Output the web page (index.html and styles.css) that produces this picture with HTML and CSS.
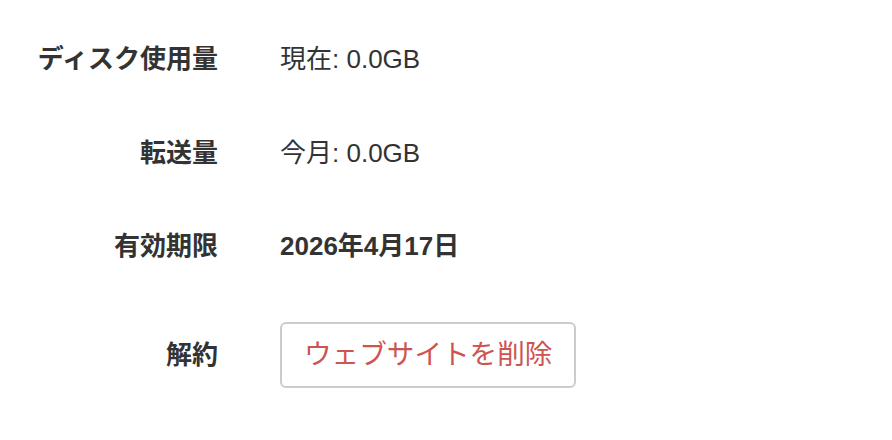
FILE: index.html
```html
<!DOCTYPE html>
<html lang="ja">
<head>
<meta charset="utf-8">
<link rel="stylesheet" href="styles.css">
</head>
<body>
<div class="settings">
  <div class="label">ディスク使用量</div>
  <div class="value">現在: 0.0GB</div>
  <div class="label">転送量</div>
  <div class="value">今月: 0.0GB</div>
  <div class="label">有効期限</div>
  <div class="value strong">2026年4月17日</div>
  <div class="label">解約</div>
  <div class="value"><button class="btn-delete">ウェブサイトを削除</button></div>
</div>
</body>
</html>
```
FILE: styles.css
```css
html, body {
  margin: 0;
  padding: 0;
  background: #fff;
}
body {
  font-family: "Liberation Sans", "Noto Sans CJK JP", sans-serif;
  color: #333;
  font-size: 26px;
}
.settings {
  display: grid;
  grid-template-columns: 218px auto;
  column-gap: 62px;
  row-gap: 57.5px;
  padding-top: 41px;
  align-items: center;
}
.label {
  text-align: right;
  font-weight: bold;
  line-height: 36px;
}
.value {
  line-height: 36px;
}
.strong {
  font-weight: bold;
}
.btn-delete {
  font-family: "Liberation Sans", "Noto Sans CJK JP", sans-serif;
  font-size: 27.6px;
  color: #cd544f;
  background: #fff;
  border: 2px solid #ccc;
  border-radius: 6px;
  padding: 12px 22px;
  line-height: 38px;
  display: block;
}
```
